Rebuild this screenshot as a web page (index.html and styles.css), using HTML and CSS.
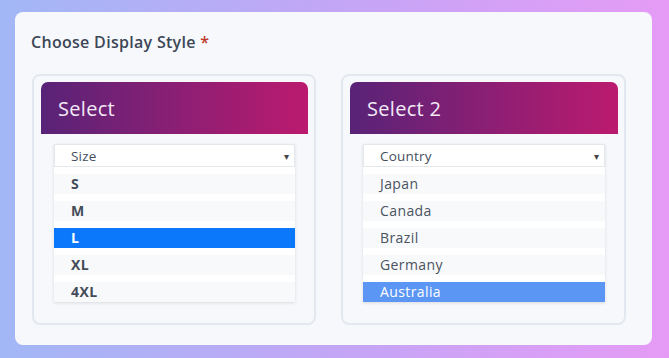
FILE: index.html
```html
<!DOCTYPE html>
<html lang="en">
<head>
    <meta charset="UTF-8">
    <meta name="viewport" content="width=device-width, initial-scale=1.0">
    <title>Choose Display Style</title>
    <link rel="stylesheet" href="styles.css">
</head>
<body>
    <div class="card">
        <h2 class="title">Choose Display Style <span class="req">*</span></h2>

        <div class="panels">
            <div class="panel">
                <div class="panel-head">Select</div>
                <div class="dropdown">
                    <div class="dropdown-field">
                        <span>Size</span>
                        <span class="caret">&#9662;</span>
                    </div>
                    <ul class="options bold">
                        <li>S</li>
                        <li>M</li>
                        <li class="active">L</li>
                        <li>XL</li>
                        <li>4XL</li>
                    </ul>
                </div>
            </div>

            <div class="panel">
                <div class="panel-head">Select 2</div>
                <div class="dropdown">
                    <div class="dropdown-field">
                        <span>Country</span>
                        <span class="caret">&#9662;</span>
                    </div>
                    <ul class="options">
                        <li>Japan</li>
                        <li>Canada</li>
                        <li>Brazil</li>
                        <li>Germany</li>
                        <li class="hover">Australia</li>
                    </ul>
                </div>
            </div>
        </div>
    </div>
</body>
</html>
```

FILE: styles.css
```css
html, body {
    height: 100%;
}
body {
    margin: 0;
    padding: 12px 17px 13px 15px;
    box-sizing: border-box;
    font-family: "Open Sans", Arial, sans-serif;
    background: linear-gradient(90deg, #a2b7f6 0%, #c3a6f6 50%, #e59bf6 100%);
}
.card {
    height: 100%;
    box-sizing: border-box;
    background: #f7f8fb;
    border-radius: 8px;
    padding: 19px 26px 20px 17px;
}
.title {
    margin: 0 0 21px -1px;
    font-size: 16px;
    font-weight: 600;
    letter-spacing: 0.3px;
    color: #3c4757;
    line-height: 22px;
}
.req {
    color: #c0392b;
}
.panels {
    display: grid;
    grid-template-columns: 284px 285px;
    gap: 25px;
}
.panel {
    height: 251px;
    box-sizing: border-box;
    border: 2px solid #e3e8f0;
    border-radius: 8px;
    padding: 6px 6px 0 7px;
}
.panel-head {
    height: 52px;
    box-sizing: border-box;
    padding: 0 17px;
    display: flex;
    align-items: center;
    border-radius: 7px 7px 0 0;
    background: linear-gradient(90deg, #582377 0%, #8a1f74 50%, #bb1a6e 100%);
    color: #f3eaf6;
    font-size: 20px;
    letter-spacing: 0.3px;
}
.dropdown {
    margin: 10px 13px 0 13px;
    background: #fff;
    box-shadow: 0 1px 3px rgba(0, 0, 0, 0.12);
}
.dropdown-field {
    height: 23px;
    box-sizing: border-box;
    border: 1px solid #e4e7ec;
    display: flex;
    align-items: center;
    justify-content: space-between;
    padding: 0 5px 0 16px;
    font-size: 13.5px;
    letter-spacing: 0.2px;
    color: #454f5b;
}
.caret {
    font-size: 10px;
    color: #444;
}
.options {
    list-style: none;
    margin: 0;
    padding: 7px 0 0 0;
}
.options li {
    height: 20px;
    line-height: 20px;
    margin-bottom: 7px;
    padding-left: 17px;
    background: #f8f9fb;
    font-size: 14px;
    font-weight: 500;
    letter-spacing: 0.4px;
    color: #4a5360;
}
.options li:last-child {
    margin-bottom: 4px;
}
.options.bold li {
    font-weight: 700;
    color: #444c58;
}
.options li.active {
    background: #0b77fb;
    color: #fff;
}
.options li.hover {
    background: #5b96f5;
    color: #fff;
}
```
